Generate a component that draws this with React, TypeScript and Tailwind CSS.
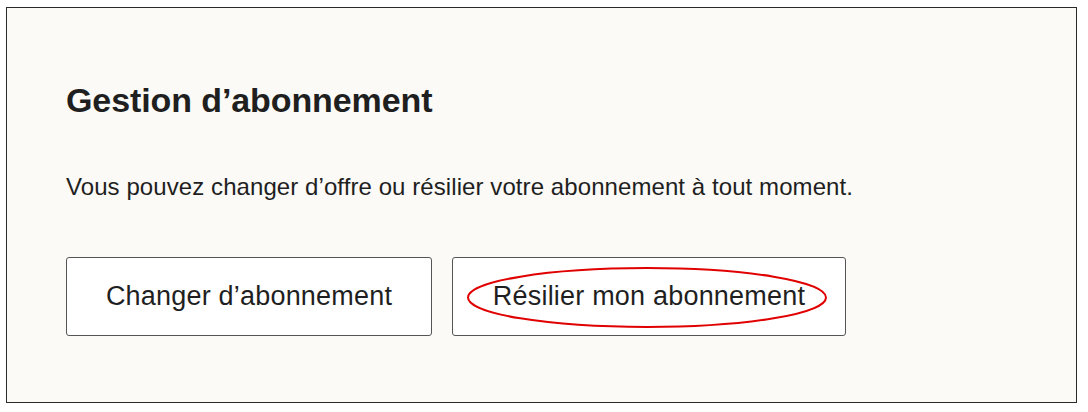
export default function App() {
  return (
    <div className="w-[1088px] h-[412px] bg-white pt-[7px] pl-[6px] font-['Liberation_Sans',Arial,sans-serif]">
      <div className="w-[1071px] h-[396px] border-[1.5px] border-[#2a2a2a] bg-[#fbfaf6] pl-[59px] pt-[72px] text-[#1f1f1f]">
        <h2 className="text-[34px] leading-[40px] font-bold tracking-[-0.1px]">
          Gestion d’abonnement
        </h2>

        <p className="mt-[53px] text-[24px] leading-[28px] tracking-[0.08px]">
          Vous pouvez changer d’offre ou résilier votre abonnement à tout moment.
        </p>

        <div className="mt-[56px] flex gap-[20px]">
          <button className="w-[366px] h-[79px] bg-white border border-[#555] rounded-[3px] text-[27px] tracking-[0.2px]">
            Changer d’abonnement
          </button>

          <div className="relative">
            <button className="w-[394px] h-[79px] bg-white border border-[#555] rounded-[3px] text-[27px] tracking-[0.2px]">
              Résilier mon abonnement
            </button>
            <svg
              className="absolute left-[14px] top-[9px] pointer-events-none"
              width="362"
              height="63"
              viewBox="0 0 362 63"
            >
              <ellipse cx="181" cy="31.5" rx="179" ry="29.5" fill="none" stroke="#e00000" strokeWidth="2" />
            </svg>
          </div>
        </div>
      </div>
    </div>
  );
}
